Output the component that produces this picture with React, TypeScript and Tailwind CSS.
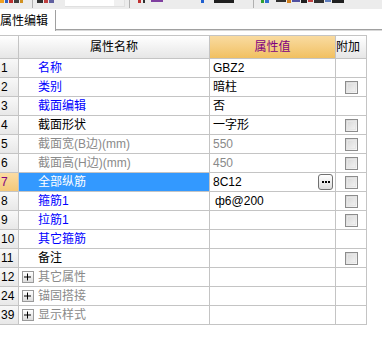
import React from "react";

type Row = {
  no: string;
  name: string;
  color: "blue" | "black" | "gray";
  value?: string;
  valueGray?: boolean;
  check?: boolean;
  group?: boolean;
  selected?: boolean;
};

const rows: Row[] = [
  { no: "1", name: "名称", color: "blue", value: "GBZ2" },
  { no: "2", name: "类别", color: "blue", value: "暗柱", check: true },
  { no: "3", name: "截面编辑", color: "blue", value: "否" },
  { no: "4", name: "截面形状", color: "black", value: "一字形", check: true },
  { no: "5", name: "截面宽(B边)(mm)", color: "gray", value: "550", valueGray: true, check: true },
  { no: "6", name: "截面高(H边)(mm)", color: "gray", value: "450", valueGray: true, check: true },
  { no: "7", name: "全部纵筋", color: "black", value: "8C12", check: true, selected: true },
  { no: "8", name: "箍筋1", color: "blue", value: "ф6@200", check: true },
  { no: "9", name: "拉筋1", color: "blue", check: true },
  { no: "10", name: "其它箍筋", color: "blue" },
  { no: "11", name: "备注", color: "black", check: true },
  { no: "12", name: "其它属性", color: "gray", group: true },
  { no: "24", name: "锚固搭接", color: "gray", group: true },
  { no: "39", name: "显示样式", color: "gray", group: true },
];

const textColor = {
  blue: "text-[#0000ff]",
  black: "text-black",
  gray: "text-[#8a8a8a]",
};

function CheckBox() {
  return (
    <div className="w-[13px] h-[13px] border border-[#8c8c8c] bg-gradient-to-br from-[#d4d4d4] to-[#f8f8f8] p-px">
      <div className="w-full h-full border border-[#e6e6e6]" />
    </div>
  );
}

function PlusBox() {
  return (
    <div className="w-[12px] h-[12px] border border-[#9a9a9a] bg-gradient-to-b from-white to-[#dcdcdc] flex items-center justify-center">
      <svg width="8" height="8" viewBox="0 0 8 8">
        <path d="M0 4h7M3.5 0.5v7" stroke="#000" strokeWidth="1" />
      </svg>
    </div>
  );
}

export default function App() {
  return (
    <div
      className="w-[382px] h-[340px] bg-white overflow-hidden text-[12px] leading-none"
      style={{ fontFamily: '"Liberation Sans", "Noto Sans CJK SC", sans-serif' }}
    >
      {/* toolbar remnants */}
      <div className="h-[9px] bg-[#ececec] flex items-start relative">
        <div className="flex gap-px pt-0 w-[32px]">
          <span className="w-[4px] h-[3px] bg-[#f0a020]" />
          <span className="w-[3px] h-[3px] bg-[#3060c0]" />
          <span className="w-[4px] h-[3px] bg-[#c03030]" />
          <span className="w-[5px] h-[3px] bg-[#404040]" />
          <span className="w-[3px] h-[3px] bg-[#d09020]" />
        </div>
        <div className="w-px h-[8px] bg-[#b0b0b0]" />
        <div className="flex gap-px ml-[4px] w-[28px]">
          <span className="w-[6px] h-[3px] bg-[#303030]" />
          <span className="w-[4px] h-[3px] bg-[#c04040]" />
          <span className="w-[5px] h-[3px] bg-[#6060a0]" />
        </div>
        <div className="w-[60px] h-[7px] bg-white border-r border-b border-[#e0e0e0] flex justify-end">
          <div className="w-[10px] h-[6px] bg-[#f0f0f0]" />
        </div>
        <div className="w-px h-[8px] bg-[#b0b0b0] ml-[4px]" />
        <div className="flex gap-[2px] ml-[8px] w-[115px]">
          <span className="w-[3px] h-[3px] bg-[#c03030]" />
          <span className="w-[2px] h-[3px] bg-[#303030]" />
          <span className="w-[12px] h-[2px] bg-[#8040a0] ml-[4px]" />
          <span className="w-[3px] h-[3px] bg-[#2060d0] ml-[36px]" />
          <span className="w-[20px] h-[3px] bg-[#202020] ml-[8px]" />
        </div>
        <div className="w-px h-[8px] bg-[#b0b0b0]" />
        <div className="flex gap-px ml-[7px]">
          <span className="w-[3px] h-[3px] bg-[#30a030]" />
          <span className="w-[4px] h-[3px] bg-[#3070d0]" />
          <span className="w-[10px] h-[2px] bg-[#303030] ml-[6px]" />
          <span className="w-[4px] h-[3px] bg-[#d08020]" />
          <span className="w-[8px] h-[2px] bg-[#5050a0]" />
          <span className="w-[6px] h-[3px] bg-[#202020]" />
          <span className="w-[5px] h-[2px] bg-[#c04040]" />
          <span className="w-[10px] h-[3px] bg-[#303030]" />
          <span className="w-[6px] h-[2px] bg-[#6080c0]" />
          <span className="w-[12px] h-[3px] bg-[#202020]" />
        </div>
      </div>

      {/* tab strip */}
      <div className="flex items-end h-[22px]">
        <div className="w-[56px] h-[21px] bg-white border-r border-[#a0a0a0] flex items-center pl-0 text-black text-[12px]">
          属性编辑
        </div>
        <div className="flex-1 h-[2px] bg-[#a0a0a0] border-b border-[#d8d8d8]" />
      </div>

      {/* table */}
      <div className="mt-[4px] w-[367px] grid grid-cols-[19px_191px_126px_31px]">
        {/* header */}
        <div className="h-[24px] border-r border-b border-t border-[#c4c4c4] bg-gradient-to-b from-white to-[#e6e6e6]" />
        <div className="h-[24px] border-r border-b border-t border-[#c4c4c4] bg-gradient-to-b from-white to-[#e6e6e6] flex items-center justify-center text-black">
          属性名称
        </div>
        <div className="h-[24px] border-r border-b border-t border-[#c4c4c4] bg-gradient-to-b from-[#f9dba0] to-[#f1c060] flex items-center justify-center text-[#800080]">
          属性值
        </div>
        <div className="h-[24px] border-r border-b border-t border-[#c4c4c4] bg-gradient-to-b from-white to-[#e6e6e6] flex items-center text-black">
          附加
        </div>

        {rows.map((r) => (
          <React.Fragment key={r.no}>
            <div
              className={`h-[19px] border-r border-b border-[#c4c4c4] flex items-center pl-px ${
                r.selected
                  ? "bg-gradient-to-b from-[#fbdca4] to-[#f4c878] text-[#800080]"
                  : "bg-gradient-to-b from-[#f8f8f8] to-[#e8e8e8] text-black"
              }`}
            >
              {r.no}
            </div>
            <div
              className={`h-[19px] border-r border-b border-[#c4c4c4] flex items-center ${
                r.selected ? "bg-[#3399ff] text-white" : textColor[r.color]
              } ${r.group ? "pl-[3px] gap-[4px]" : "pl-[19px]"}`}
            >
              {r.group && <PlusBox />}
              <span>{r.name}</span>
            </div>
            <div
              className={`h-[19px] border-r border-b border-[#c4c4c4] flex items-center pl-[3px] pr-[2px] ${
                r.valueGray ? "text-[#8a8a8a]" : "text-black"
              }`}
            >
              <span className={r.value === "ф6@200" ? "pl-[2px]" : ""}>{r.value ?? ""}</span>
              {r.selected && (
                <div className="ml-auto w-[15px] h-[16px] border border-[#707070] rounded-[3px] bg-gradient-to-b from-white to-[#dcdcdc] flex items-center justify-center gap-px">
                  <span className="w-[2px] h-[2px] bg-black" />
                  <span className="w-[2px] h-[2px] bg-black" />
                  <span className="w-[2px] h-[2px] bg-black" />
                </div>
              )}
            </div>
            <div className="h-[19px] border-r border-b border-[#c4c4c4] flex items-center justify-center">
              {r.check && <CheckBox />}
            </div>
          </React.Fragment>
        ))}
      </div>
    </div>
  );
}
